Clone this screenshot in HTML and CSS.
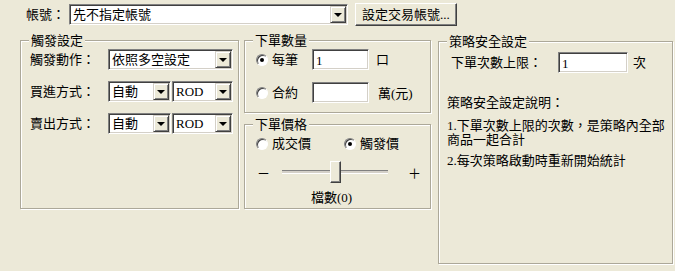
FILE: index.html
```html
<!DOCTYPE html>
<html>
<head>
<meta charset="utf-8">
<link rel="stylesheet" href="styles.css">
</head>
<body>
<div class="top">
  <span class="acct-lbl">帳號：</span>
  <div class="combo acct-combo"><span class="val">先不指定帳號</span><span class="drop"></span></div>
  <div class="btn">設定交易帳號...</div>
</div>
<div class="main">
  <div class="group g-trigger">
    <span class="legend">觸發設定</span>
    <div class="frow">
      <span class="flabel">觸發動作：</span>
      <div class="combo c-wide"><span class="val">依照多空設定</span><span class="drop"></span></div>
    </div>
    <div class="frow">
      <span class="flabel">買進方式：</span>
      <div class="combo c-auto"><span class="val">自動</span><span class="drop"></span></div>
      <div class="combo c-rod"><span class="val">ROD</span><span class="drop"></span></div>
    </div>
    <div class="frow">
      <span class="flabel">賣出方式：</span>
      <div class="combo c-auto"><span class="val">自動</span><span class="drop"></span></div>
      <div class="combo c-rod"><span class="val">ROD</span><span class="drop"></span></div>
    </div>
  </div>
  <div class="col">
    <div class="group g-qty">
      <span class="legend">下單數量</span>
      <div class="qrow">
        <span class="rlabel"><span class="radio checked"></span><span>每筆</span></span>
        <div class="tb tb-qty">1</div>
        <span class="unit">口</span>
      </div>
      <div class="qrow qrow2">
        <span class="rlabel"><span class="radio"></span><span>合約</span></span>
        <div class="tb tb-qty"></div>
        <span class="unit unit2">萬(元)</span>
      </div>
    </div>
    <div class="group g-price">
      <span class="legend">下單價格</span>
      <div class="prow">
        <span class="rlabel r-first"><span class="radio"></span><span>成交價</span></span>
        <span class="rlabel"><span class="radio checked"></span><span>觸發價</span></span>
      </div>
      <div class="slider-row">
        <span class="sym">－</span>
        <div class="track"><div class="line"></div><div class="thumb"></div></div>
        <span class="sym sym-plus">＋</span>
      </div>
      <div class="ticks">檔數(0)</div>
    </div>
  </div>
  <div class="group g-safe">
    <span class="legend">策略安全設定</span>
    <div class="srow">
      <span class="slabel">下單次數上限：</span>
      <div class="tb tb-limit">1</div>
      <span class="unit">次</span>
    </div>
    <p class="desc-title">策略安全設定說明：</p>
    <p class="desc desc1">1.下單次數上限的次數，是策略內全部商品一起合計</p>
    <p class="desc desc2">2.每次策略啟動時重新開始統計</p>
  </div>
</div>
</body>
</html>
```

FILE: styles.css
```css
html, body {
  margin: 0;
  padding: 0;
}
body {
  width: 675px;
  height: 271px;
  background: #ECE9D8;
  font-family: "Liberation Serif", "Noto Sans CJK TC", serif;
  font-size: 13px;
  line-height: 13px;
  color: #000;
  overflow: hidden;
}

/* top row */
.top {
  display: flex;
  align-items: center;
  height: 23px;
  padding: 3px 0 0 26px;
}
.acct-lbl {
  width: 43px;
}
.acct-combo {
  width: 279px;
}
.btn {
  width: 102px;
  height: 23px;
  box-sizing: border-box;
  margin-left: 7px;
  display: flex;
  align-items: center;
  justify-content: center;
  background: #ECE9D8;
  border: 1px solid;
  border-color: #fff #404040 #404040 #fff;
  box-shadow: inset -1px -1px 0 #808080;
}

/* combo box */
.combo {
  height: 21px;
  box-sizing: border-box;
  display: flex;
  align-items: center;
  background: #fff;
  border: 1px solid;
  border-color: #808080 #fff #fff #808080;
  box-shadow: inset 1px 1px 0 #404040, inset -1px -1px 0 #D4D0C8;
  padding: 1px;
}
.combo .val {
  padding-left: 2px;
  flex: 1;
  white-space: nowrap;
}
.drop {
  width: 16px;
  height: 17px;
  box-sizing: border-box;
  background: #ECE9D8;
  border: 1px solid;
  border-color: #D4D0C8 #404040 #404040 #D4D0C8;
  box-shadow: inset 1px 1px 0 #fff, inset -1px -1px 0 #808080;
  display: flex;
  align-items: center;
  justify-content: center;
}
.drop::after {
  content: "";
  width: 0;
  height: 0;
  border-left: 4px solid transparent;
  border-right: 4px solid transparent;
  border-top: 4px solid #000;
  margin-top: 1px;
}

/* text box */
.tb {
  height: 21px;
  box-sizing: border-box;
  background: #fff;
  border: 1px solid;
  border-color: #808080 #fff #fff #808080;
  box-shadow: inset 1px 1px 0 #404040, inset -1px -1px 0 #D4D0C8;
  padding: 4px 0 0 3px;
  line-height: 13px;
}

/* layout */
.main {
  display: flex;
  align-items: flex-start;
  margin-top: 14px;
  padding-left: 20px;
}
.group {
  position: relative;
  box-sizing: border-box;
  border: 1px solid #ACA899;
  box-shadow: inset 1px 1px 0 #fff, 1px 1px 0 #fff;
}
.legend {
  position: absolute;
  top: -7px;
  left: 8px;
  padding: 0 2px;
  background: #ECE9D8;
  line-height: 13px;
  white-space: nowrap;
}

.g-trigger {
  width: 219px;
  height: 169px;
  padding: 8px 0 0 9px;
}
.frow {
  display: flex;
  align-items: center;
  height: 21px;
  margin-bottom: 11px;
}
.flabel {
  width: 78px;
  white-space: nowrap;
}
.c-wide { width: 125px; }
.c-auto { width: 63px; }
.c-rod { width: 61px; margin-left: 1px; }

.col {
  display: flex;
  flex-direction: column;
  margin-left: 5px;
  width: 187px;
}
.g-qty {
  height: 73px;
  padding: 8px 0 0 11px;
}
.qrow {
  display: flex;
  align-items: center;
  height: 21px;
}
.qrow2 {
  margin-top: 12px;
}
.rlabel {
  display: inline-flex;
  align-items: center;
  width: 56px;
  white-space: nowrap;
}
.radio {
  display: inline-block;
  position: relative;
  width: 12px;
  height: 12px;
  box-sizing: border-box;
  border-radius: 50%;
  background: #fff;
  border: 1px solid;
  border-color: #808080 #fff #fff #808080;
  box-shadow: inset 1px 1px 0 #404040;
  margin-right: 4px;
}
.radio.checked::after {
  content: "";
  position: absolute;
  left: 3px;
  top: 3px;
  width: 4px;
  height: 4px;
  border-radius: 50%;
  background: #000;
}
.tb-qty { width: 57px; }
.unit { margin-left: 7px; }
.unit2 { margin-left: 9px; margin-top: 2px; }

.g-price {
  height: 85px;
  margin-top: 11px;
  padding: 12px 0 0 11px;
}
.prow {
  display: flex;
  align-items: center;
  height: 13px;
}
.r-first { width: 88px; }
.slider-row {
  display: flex;
  align-items: center;
  height: 22px;
  margin-top: 11px;
  padding-left: 1px;
}
.sym {
  width: 12px;
  text-align: center;
  font-family: "Noto Sans CJK TC", sans-serif;
}
.sym-plus { margin-left: 20px; }
.track {
  position: relative;
  width: 106px;
  height: 22px;
  margin-left: 13px;
}
.line {
  position: absolute;
  left: 0;
  right: 0;
  top: 9px;
  height: 2px;
  border-top: 1px solid #808080;
  border-bottom: 1px solid #fff;
  background: #D4D0C8;
}
.thumb {
  position: absolute;
  left: 48px;
  top: 0;
  width: 11px;
  height: 22px;
  box-sizing: border-box;
  background: #ECE9D8;
  border: 1px solid;
  border-color: #fff #404040 #404040 #fff;
  box-shadow: inset -1px -1px 0 #808080;
}
.ticks {
  margin-top: 8px;
  padding-left: 55px;
  white-space: nowrap;
}

.g-safe {
  width: 235px;
  height: 223px;
  margin-left: 7px;
  margin-top: 1px;
  padding: 10px 0 0 8px;
}
.srow {
  display: flex;
  align-items: center;
  height: 21px;
  padding-left: 4px;
}
.slabel {
  width: 107px;
  white-space: nowrap;
}
.tb-limit { width: 70px; }
.srow .unit { margin-left: 5px; }
.desc-title {
  margin: 23px 0 0 0;
  white-space: nowrap;
}
.desc {
  margin: 0;
  width: 224px;
  line-height: 14px;
}
.desc1 { margin-top: 10px; }
.desc2 { margin-top: 7px; white-space: nowrap; }
```
